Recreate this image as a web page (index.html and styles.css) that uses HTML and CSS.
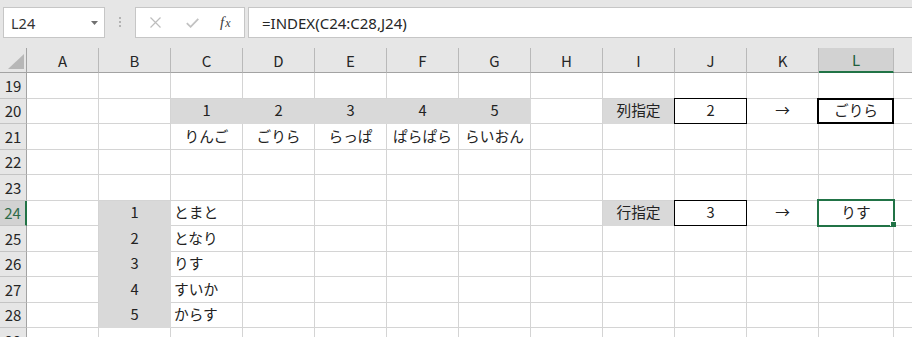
FILE: index.html
```html
<!DOCTYPE html>
<html lang="ja">
<head>
<meta charset="utf-8">
<title>INDEX</title>
<link rel="stylesheet" href="styles.css">
</head>
<body>
<div class="app">
  <div class="fbar">
    <div class="namebox">
      <span class="nb-text">L24</span>
      <svg class="nb-arrow" width="7" height="4" viewBox="0 0 7 4"><path d="M0 0H7L3.5 4Z" fill="#707070"/></svg>
    </div>
    <svg class="grip" width="2" height="31" viewBox="0 0 2 31"><rect x="0" y="10" width="2" height="2" fill="#b3b3b3"/><rect x="0" y="14" width="2" height="2" fill="#b3b3b3"/><rect x="0" y="18" width="2" height="2" fill="#b3b3b3"/></svg>
    <div class="fnbox">
      <svg class="ic-x" width="11" height="11" viewBox="0 0 11 11"><path d="M0.5 0.5L10.5 10.5M10.5 0.5L0.5 10.5" stroke="#bdbdbd" stroke-width="1.2" fill="none"/></svg>
      <svg class="ic-ok" width="13" height="10" viewBox="0 0 13 10"><path d="M0.8 5.2L4.6 8.8L12.3 0.8" stroke="#c2c2c2" stroke-width="1.8" fill="none"/></svg>
      <span class="fx"><i>f</i><i class="fx-x">x</i></span>
    </div>
    <div class="formula">=INDEX(C24:C28,J24)</div>
  </div>

  <div class="sheet">
    <div class="corner"></div>
    <div class="ch">A</div><div class="ch">B</div><div class="ch">C</div><div class="ch">D</div><div class="ch">E</div><div class="ch">F</div><div class="ch">G</div><div class="ch">H</div><div class="ch">I</div><div class="ch">J</div><div class="ch">K</div><div class="ch sel">L</div><div class="ch m"></div>

    <div class="rh">19</div>
    <div class="c"></div><div class="c"></div><div class="c"></div><div class="c"></div><div class="c"></div><div class="c"></div><div class="c"></div><div class="c"></div><div class="c"></div><div class="c"></div><div class="c"></div><div class="c"></div><div class="c m"></div>

    <div class="rh">20</div>
    <div class="c"></div><div class="c"></div><div class="c f">1</div><div class="c f">2</div><div class="c f">3</div><div class="c f">4</div><div class="c f">5</div><div class="c"></div><div class="c f">列指定</div><div class="c box">2</div><div class="c">→</div><div class="c thick">ごりら</div><div class="c m"></div>

    <div class="rh">21</div>
    <div class="c"></div><div class="c"></div><div class="c">りんご</div><div class="c">ごりら</div><div class="c">らっぱ</div><div class="c">ぱらぱら</div><div class="c">らいおん</div><div class="c"></div><div class="c"></div><div class="c"></div><div class="c"></div><div class="c"></div><div class="c m"></div>

    <div class="rh">22</div>
    <div class="c"></div><div class="c"></div><div class="c"></div><div class="c"></div><div class="c"></div><div class="c"></div><div class="c"></div><div class="c"></div><div class="c"></div><div class="c"></div><div class="c"></div><div class="c"></div><div class="c m"></div>

    <div class="rh">23</div>
    <div class="c"></div><div class="c"></div><div class="c"></div><div class="c"></div><div class="c"></div><div class="c"></div><div class="c"></div><div class="c"></div><div class="c"></div><div class="c"></div><div class="c"></div><div class="c"></div><div class="c m"></div>

    <div class="rh sel">24</div>
    <div class="c"></div><div class="c f">1</div><div class="c l">とまと</div><div class="c"></div><div class="c"></div><div class="c"></div><div class="c"></div><div class="c"></div><div class="c f">行指定</div><div class="c box">3</div><div class="c">→</div><div class="c active">りす</div><div class="c m"></div>

    <div class="rh">25</div>
    <div class="c"></div><div class="c f">2</div><div class="c l">となり</div><div class="c"></div><div class="c"></div><div class="c"></div><div class="c"></div><div class="c"></div><div class="c"></div><div class="c"></div><div class="c"></div><div class="c"></div><div class="c m"></div>

    <div class="rh">26</div>
    <div class="c"></div><div class="c f">3</div><div class="c l">りす</div><div class="c"></div><div class="c"></div><div class="c"></div><div class="c"></div><div class="c"></div><div class="c"></div><div class="c"></div><div class="c"></div><div class="c"></div><div class="c m"></div>

    <div class="rh">27</div>
    <div class="c"></div><div class="c f">4</div><div class="c l">すいか</div><div class="c"></div><div class="c"></div><div class="c"></div><div class="c"></div><div class="c"></div><div class="c"></div><div class="c"></div><div class="c"></div><div class="c"></div><div class="c m"></div>

    <div class="rh">28</div>
    <div class="c"></div><div class="c f">5</div><div class="c l">からす</div><div class="c"></div><div class="c"></div><div class="c"></div><div class="c"></div><div class="c"></div><div class="c"></div><div class="c"></div><div class="c"></div><div class="c"></div><div class="c m"></div>

    <div class="rh">29</div>
    <div class="c"></div><div class="c"></div><div class="c"></div><div class="c"></div><div class="c"></div><div class="c"></div><div class="c"></div><div class="c"></div><div class="c"></div><div class="c"></div><div class="c"></div><div class="c"></div><div class="c m"></div>
  </div>
</div>
</body>
</html>
```

FILE: styles.css
```css
html, body {
  margin: 0;
  padding: 0;
  background: #ffffff;
  overflow: hidden;
}

.app {
  width: 912px;
  height: 337px;
  overflow: hidden;
  font-family: "Noto Sans CJK JP", "Noto Sans", sans-serif;
  color: #222222;
}

/* ---------- formula bar ---------- */
.fbar {
  display: flex;
  align-items: flex-start;
  height: 48px;
  box-sizing: border-box;
  padding: 7px 0 0 3px;
  background: #e6e6e6;
}

.namebox {
  display: flex;
  align-items: center;
  width: 102px;
  height: 31px;
  box-sizing: border-box;
  border: 1px solid #c6c6c6;
  background: #ffffff;
  padding-left: 7px;
}

.nb-text {
  font-family: "Noto Sans", sans-serif;
  font-size: 14.5px;
  color: #333333;
}

.nb-arrow {
  margin-left: auto;
  margin-right: 6px;
}

.grip {
  margin-left: 14px;
  flex: none;
}

.fnbox {
  display: flex;
  align-items: center;
  width: 110px;
  height: 31px;
  box-sizing: border-box;
  margin-left: 14px;
  border: 1px solid #c6c6c6;
  background: #ffffff;
}

.ic-x { margin-left: 14px; flex: none; }
.ic-ok { margin-left: 25px; flex: none; }

.fx {
  margin-left: 21px;
  font-family: "Liberation Serif", serif;
  font-size: 15px;
  color: #404040;
  line-height: 1;
}
.fx-x {
  font-size: 12px;
  margin-left: 1px;
}

.formula {
  flex: 1;
  height: 31px;
  box-sizing: border-box;
  margin-left: 3px;
  border: 1px solid #c6c6c6;
  border-right: none;
  background: #ffffff;
  padding-left: 13px;
  display: flex;
  align-items: center;
  font-family: "Noto Sans", sans-serif;
  font-size: 15px;
  color: #262626;
}

/* ---------- sheet grid ---------- */
.sheet {
  display: grid;
  grid-template-columns: 27px repeat(11, 72px) 75px 1fr;
  grid-template-rows: 25px repeat(11, 25.5px);
  font-size: 14.7px;
}

.sheet > div {
  box-sizing: border-box;
  position: relative;
  display: flex;
  align-items: center;
  justify-content: center;
  white-space: nowrap;
  line-height: 1;
}

.corner {
  background: #e6e6e6;
  border-right: 1px solid #a3a3a3;
  border-bottom: 1px solid #a3a3a3;
}
.corner::after {
  content: "";
  position: absolute;
  right: 2px;
  bottom: 3px;
  width: 16px;
  height: 15px;
  background: #b7b7b7;
  clip-path: polygon(100% 0, 100% 100%, 0 100%);
}

.ch {
  background: #e6e6e6;
  border-right: 1px solid #b9b9b9;
  border-bottom: 1px solid #a3a3a3;
  font-size: 15px;
  color: #262626;
}
.ch.sel {
  background: #d2d2d2;
  border-bottom: 2px solid #217346;
  color: #1e5f3c;
}
.ch.m { border-right: none; }

.rh {
  background: #e6e6e6;
  border-right: 1px solid #a3a3a3;
  border-bottom: 1px solid #c4c4c4;
  font-size: 15px;
  color: #262626;
}
.rh.sel {
  background: #d2d2d2;
  border-right: 2px solid #217346;
  color: #2f6b4a;
}

.c {
  border-right: 1px solid #d4d4d4;
  border-bottom: 1px solid #d4d4d4;
  color: #222222;
}
.c.m { border-right: none; }

.c.l {
  justify-content: flex-start;
  padding-left: 3px;
}

.c.f {
  background: #d9d9d9;
  border-color: #d9d9d9;
}

.box, .thick, .active { z-index: 2; }

.box::after {
  content: "";
  position: absolute;
  inset: -1px;
  border: 1px solid #000000;
}

.thick::after {
  content: "";
  position: absolute;
  top: -1px;
  left: -2px;
  right: -1px;
  bottom: -1px;
  border: 2px solid #000000;
}

.active::after {
  content: "";
  position: absolute;
  inset: -2px;
  border: 2px solid #217346;
}
.active::before {
  content: "";
  position: absolute;
  right: -3px;
  bottom: -2px;
  width: 5px;
  height: 5px;
  background: #217346;
  box-shadow: -1px -1px 0 #ffffff;
  z-index: 3;
}
```
